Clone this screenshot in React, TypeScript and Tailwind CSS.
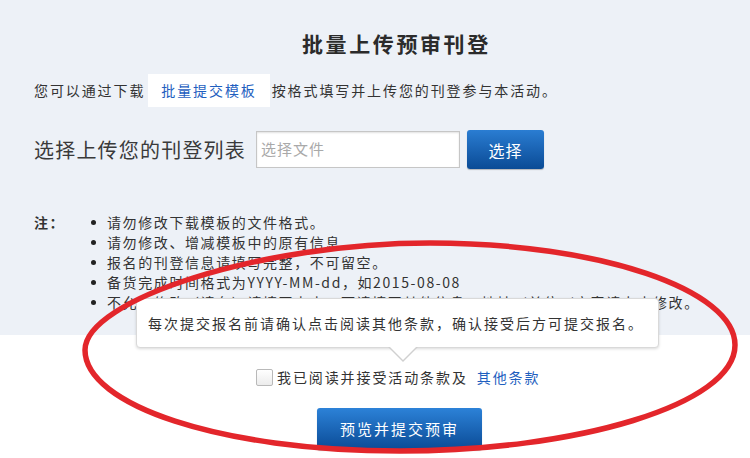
const notes = [
  "请勿修改下载模板的文件格式。",
  "请勿修改、增减模板中的原有信息",
  "报名的刊登信息请填写完整，不可留空。",
  "备货完成时间格式为YYYY-MM-dd，如2015-08-08",
  "不允许修改（请在）请填写上来，可请填写其他信息，地址／单位／商家请上来修改。",
];

const App = () => {
  return (
    <div className="relative w-[750px] h-[458px] overflow-hidden bg-white text-[#333] font-['Noto_Sans_CJK_SC',sans-serif]">
      {/* grey upper part */}
      <div className="h-[335px] bg-[#edf1f7] pl-[34px] pt-[31px]">
        <h1 className="pl-[268px] text-[21px] leading-[24px] font-bold tracking-[2.6px] text-[#2b2b2b]">
          批量上传预审刊登
        </h1>

        <div className="mt-[19px] flex h-[33px] items-center text-[14px] tracking-[1.9px]">
          <span>您可以通过下载</span>
          <a className="ml-[3px] mr-[2px] flex h-full items-center bg-white px-[13px] text-[#1f5fbf]">
            批量提交模板
          </a>
          <span>按格式填写并上传您的刊登参与本活动。</span>
        </div>

        <div className="mt-[23px] flex h-[39px] items-center">
          <span className="text-[20px] tracking-[1.2px] text-[#3a3a3a]">选择上传您的刊登列表</span>
          <div className="ml-[10px] flex h-[37px] w-[204px] items-center border border-[#c6c6c6] bg-white pl-[4px] text-[15px] tracking-[1px] text-[#a9a9a9] shadow-[inset_0_1px_2px_rgba(0,0,0,0.12)]">
            选择文件
          </div>
          <button className="ml-[7px] h-[39px] w-[77px] rounded-[3px] bg-linear-to-b from-[#2a7dd2] to-[#0a4b96] text-[16px] tracking-[1px] text-white shadow-[0_1px_1px_rgba(0,0,0,0.25)]">
            选择
          </button>
        </div>

        <div className="mt-[43px] flex text-[14px] leading-[20px] tracking-[1.6px]">
          <span className="w-[57px] font-bold">注：</span>
          <ul className="flex flex-col">
            {notes.map((n) => (
              <li key={n} className="flex items-center whitespace-nowrap">
                <span className="mr-[11px] h-[5px] w-[5px] rounded-full bg-[#222]" />
                <span>{n}</span>
              </li>
            ))}
          </ul>
        </div>
      </div>

      {/* white lower part */}
      <div className="flex flex-col items-start pt-[33px]">
        <div className="ml-[256px] flex h-[18px] items-center text-[14px] tracking-[1.9px]">
          <span className="mr-[4px] h-[17px] w-[17px] rounded-[2px] border border-[#b9b9b9] bg-linear-to-b from-white to-[#ececec]" />
          <span className="text-[#333]">我已阅读并接受活动条款及</span>
          <a className="ml-[9px] text-[#1f5fbf]">其他条款</a>
        </div>
        <button className="mt-[22px] ml-[317px] h-[42px] w-[165px] rounded-[3px] bg-linear-to-b from-[#2c82d8] to-[#0a4b96] text-[15px] tracking-[2px] text-white shadow-[0_1px_1px_rgba(0,0,0,0.25)]">
          预览并提交预审
        </button>
      </div>

      {/* tooltip bubble over the notes */}
      <div className="absolute left-[136px] top-[298px] flex h-[50px] w-[523px] items-center rounded-[4px] border border-[#d9d9d9] bg-white pl-[11px] text-[14px] tracking-[2px] text-[#333] shadow-[0_1px_3px_rgba(0,0,0,0.15)]">
        每次提交报名前请确认点击阅读其他条款，确认接受后方可提交报名。
        <span className="absolute left-[251px] top-[48px] h-0 w-0 border-x-[15px] border-t-[15px] border-x-transparent border-t-[#d0d0d0]" />
        <span className="absolute left-[252px] top-[47px] h-0 w-0 border-x-[14px] border-t-[14px] border-x-transparent border-t-white" />
      </div>

      {/* hand-drawn red ellipse */}
      <svg className="pointer-events-none absolute left-0 top-0" width="750" height="458" viewBox="0 0 750 458">
        <path
          d="M 85 350 C 85 300, 260 243, 430 243 C 600 243, 735 290, 735 345 C 735 405, 575 451, 400 451 C 220 451, 85 405, 85 350 Z"
          fill="none"
          stroke="#e3262b"
          strokeWidth="5.5"
        />
      </svg>
    </div>
  );
};

export default App;
